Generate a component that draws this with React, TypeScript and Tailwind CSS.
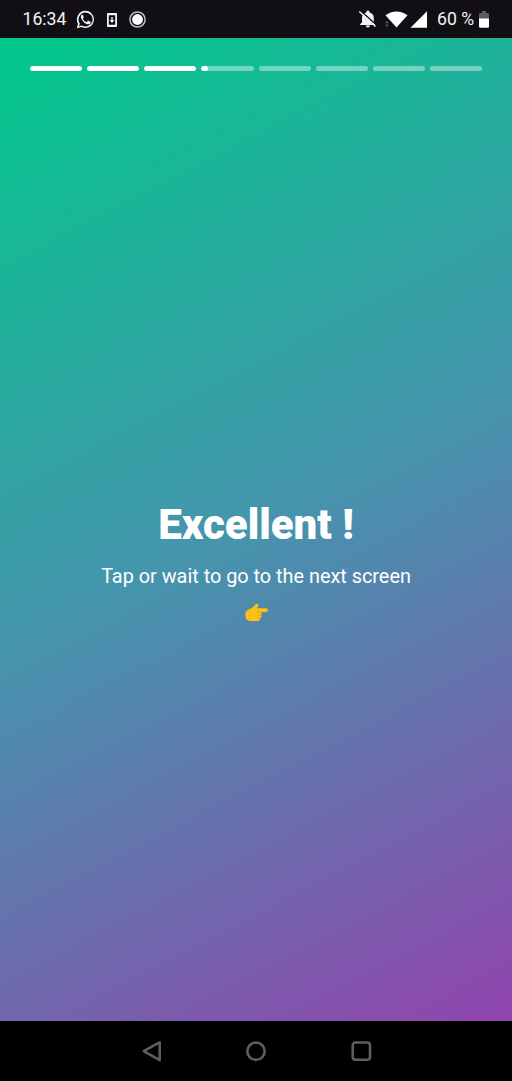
import React from "react";

const segments = [100, 100, 100, 13, 0, 0, 0, 0];

function StatusBar() {
  return (
    <header className="flex h-[38px] shrink-0 items-center bg-[#110f14] pl-[22.500px] pr-[23px] leading-none text-[#f3f3f5]">
      <span className="w-[44.500px] whitespace-nowrap pt-[2px] text-[17.600px]">16:34</span>
      <svg className="ml-[9px] mt-px" width="19" height="19" viewBox="0 0 24 24" fill="#f3f3f5">
        <path d="M12 1.1A10.8 10.8 0 0 0 2.6 17.3L1 23l5.900-1.500A10.8 10.8 0 1 0 12 1.100Zm0 2a8.900 8.900 0 1 1-4.700 16.400l-3.500.9 1-3.400A8.900 8.900 0 0 1 12 3.100Z" />
        <path d="M8.800 6.500c-.3-.5-.5-.5-.9-.5-.5 0-1.800.8-1.800 2.600 0 2 1.400 3.800 1.600 4 .2.3 2.800 4.400 6.800 5.400 2.400.6 3.600-.8 3.900-1.700.2-.8.2-1.300 0-1.500l-2.700-1.300c-.5-.2-.7 0-.9.3l-1 1.200c-.2.2-.4.2-.8.1-2-.8-3.400-2.100-4.300-3.800-.2-.3 0-.5.2-.7l.8-1c.1-.3.1-.5 0-.8Z" />
      </svg>
      <svg className="ml-[12px] mt-px" width="10" height="14" viewBox="0 0 10 14">
        <path fill="#f3f3f5" fillRule="evenodd" d="M1 0h8a1 1 0 0 1 1 1v12a1 1 0 0 1-1 1H1a1 1 0 0 1-1-1V1a1 1 0 0 1 1-1Zm.8 2.200v9.600h6.400V2.200Z" />
        <path fill="#f3f3f5" d="M4.300 4h1.400v3h1.800L5 9.900 2.500 7h1.800Z" />
      </svg>
      <svg className="ml-[12px] mt-px" width="17" height="17" viewBox="0 0 17 17">
        <circle cx="8.500" cy="8.500" r="7.600" fill="none" stroke="#bdbdc0" strokeWidth="1.500" />
        <circle cx="8.500" cy="8.500" r="5.400" fill="#fff" />
      </svg>
      <div className="flex-1" />
      <svg width="20" height="18" viewBox="0 0 20 18">
        <path fill="#f3f3f5" d="M4 12.500V8C4 5 5.800 3.200 8.300 2.600V2a1.600 1.600 0 0 1 3.200 0v.6C14.200 3.200 15.800 5 15.800 8v4.500l1.400 1.500v1H2.200v-1ZM7.800 15.500h4.200a2.100 2.100 0 0 1-4.200 0Z" />
        <path d="M2.900 1 19 15.500" stroke="#110f14" strokeWidth="1.300" />
        <path d="M1.300 1.500 17.500 16.600" stroke="#f3f3f5" strokeWidth="1.400" />
      </svg>
      <svg className="ml-[7px] mt-px" width="24" height="17" viewBox="0 0 24 17">
        <path fill="#fff" d="M.5 4.200C7-.9 16-.9 22.500 4.200L11.500 16.600Z" />
        <path fill="#5c5b60" d="m0 12.300 2-2.300 2 2.300Zm0 1.500h4L2 16Z" />
      </svg>
      <svg className="ml-[1px] mt-px" width="18" height="17" viewBox="0 0 18 17">
        <path fill="#fff" d="M17 .3v16.500H.5Z" />
      </svg>
      <span className="ml-[9px] w-[38px] whitespace-nowrap pt-[2px] text-[17.600px]">60 %</span>
      <svg className="ml-[4px]" width="10" height="17" viewBox="0 0 10 17">
        <path fill="#5c5a5f" d="M3 0h4v2h2.200l.8.800V8H0V2.800L.8 2H3Z" />
        <path fill="#fff" d="M0 7.500h10V16l-.8.800H.8L0 16Z" />
      </svg>
    </header>
  );
}

function NavigationBar() {
  return (
    <nav className="flex h-[60px] shrink-0 items-center justify-center gap-[83px] bg-black">
      <svg width="22" height="22" viewBox="0 0 22 22" fill="none" stroke="#5e5e60" strokeWidth="2.600" strokeLinejoin="round">
        <path d="M19.700 2.300v17.800L3.700 11.200Z" />
      </svg>
      <svg width="22" height="22" viewBox="0 0 22 22" fill="none" stroke="#5e5e60" strokeWidth="2.600">
        <circle cx="11" cy="11.200" r="8.700" />
      </svg>
      <svg width="22" height="22" viewBox="0 0 22 22" fill="none" stroke="#5e5e60" strokeWidth="2.600">
        <rect x="2.700" y="2.500" width="17.300" height="17.300" rx="2.800" />
      </svg>
    </nav>
  );
}

export default function App() {
  return (
    <div className="flex h-[1081px] w-[512px] flex-col overflow-hidden font-['Roboto',sans-serif]">
      <StatusBar />
      <main className="flex flex-1 flex-col bg-[linear-gradient(152.490deg,#00c98b_0%,#4694ad_50%,#9144ad_100%)] text-white">
        <div className="mx-[30px] mt-[28px] grid grid-cols-8 gap-[5px]">
          {segments.map((value, i) => (
            <div key={i} className="h-[5px] overflow-hidden rounded-full bg-white/40">
              <div className="h-full rounded-full bg-white" style={{ width: `${value}%` }} />
            </div>
          ))}
        </div>
        <section className="mt-[429px] flex flex-col items-center">
          <h1 className="whitespace-nowrap text-[42px] font-black leading-[50px]">Excellent !</h1>
          <p className="mt-[13.500px] whitespace-nowrap text-[19.850px] leading-[26px]">Tap or wait to go to the next screen</p>
          <svg className="ml-px mt-[13.500px]" width="24" height="20" viewBox="0 0 24 20">
            <path fill="#fdc014" d="M.5 9C2 7 5 5.800 7.500 4.500L10.500 1.500c1.600-1.500 3.300-.8 3 .4L12 5.200h9.200c2.200 0 2.200 3.800 0 3.800H16c1.500.8 1.300 2.500-.2 3.200 1 1 .6 2.600-.8 3 .6 1.300-.2 2.800-1.600 2.800H6.500c-3.500 0-6-1.500-6-4.500Z" />
            <path d="M16 9h-3.500m3.300 3.200h-3.300m2.500 3h-2.500" fill="none" stroke="#e59a13" strokeWidth=".7" />
          </svg>
        </section>
      </main>
      <NavigationBar />
    </div>
  );
}
